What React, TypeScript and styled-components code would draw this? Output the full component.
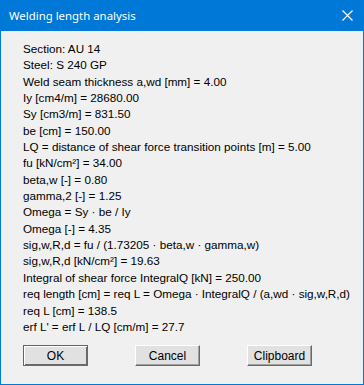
import { createGlobalStyle, styled } from 'styled-components';

const GlobalStyle = createGlobalStyle`
  html, body {
    margin: 0;
    padding: 0;
    background: #f0f0f0;
  }
`;

const Window = styled.div`
  width: 364px;
  height: 385px;
  box-sizing: border-box;
  border: 1px solid #0078d7;
  border-top: none;
  background: #f0f0f0;
  display: flex;
  flex-direction: column;
`;

const TitleBar = styled.div`
  height: 31px;
  margin: 0 -1px;
  background: #0078d7;
  display: flex;
  align-items: center;
  justify-content: space-between;
  padding: 0 11px 0 9px;
  color: #ffffff;
  font-family: 'Noto Sans', sans-serif;
  font-size: 11.4px;
`;

const Body = styled.div`
  padding: 10px 0 0 22px;
  font-family: 'Liberation Sans', Arial, sans-serif;
  font-size: 11.7px;
  color: #000000;
`;

const Line = styled.div`
  height: 16.35px;
  line-height: 16.35px;
  white-space: nowrap;
`;

const ButtonRow = styled.div`
  display: flex;
  gap: 47px;
  margin-top: 10px;
`;

const Button = styled.button<{ $default?: boolean }>`
  width: 65px;
  height: 21px;
  box-sizing: border-box;
  background: #e1e1e1;
  font-family: 'Liberation Sans', Arial, sans-serif;
  font-size: 12px;
  color: #000;
  padding: 0;
  border: 1px solid ${(p) => (p.$default ? '#646464' : '#ffffff')};
  border-right-color: #696969;
  border-bottom-color: #696969;
  box-shadow: ${(p) =>
    p.$default
      ? 'inset 1px 1px 0 #ffffff, inset -1px -1px 0 #696969'
      : 'inset -1px -1px 0 #a0a0a0'};
`;

const lines = [
  'Section: AU 14',
  'Steel: S 240 GP',
  'Weld seam thickness a,wd [mm] = 4.00',
  'Iy [cm4/m] = 28680.00',
  'Sy [cm3/m] = 831.50',
  'be [cm] = 150.00',
  'LQ = distance of shear force transition points [m] = 5.00',
  'fu [kN/cm²] = 34.00',
  'beta,w [-] = 0.80',
  'gamma,2 [-] = 1.25',
  'Omega = Sy · be / Iy',
  'Omega [-] = 4.35',
  'sig,w,R,d = fu / (1.73205 · beta,w · gamma,w)',
  'sig,w,R,d [kN/cm²] = 19.63',
  'Integral of shear force IntegralQ [kN] = 250.00',
  'req length [cm] = req L = Omega · IntegralQ / (a,wd · sig,w,R,d)',
  'req L [cm] = 138.5',
  "erf L' = erf L / LQ [cm/m] = 27.7",
];

export default function App() {
  return (
    <>
      <GlobalStyle />
      <Window>
        <TitleBar>
          <span>Welding length analysis</span>
          <svg width="11" height="11" viewBox="0 0 11 11">
            <path d="M0.5 0.5 L10.5 10.5 M10.5 0.5 L0.5 10.5" stroke="#fff" strokeWidth="1.2" />
          </svg>
        </TitleBar>
        <Body>
          {lines.map((l) => (
            <Line key={l}>{l}</Line>
          ))}
          <ButtonRow>
            <Button $default>OK</Button>
            <Button>Cancel</Button>
            <Button>Clipboard</Button>
          </ButtonRow>
        </Body>
      </Window>
    </>
  );
}
